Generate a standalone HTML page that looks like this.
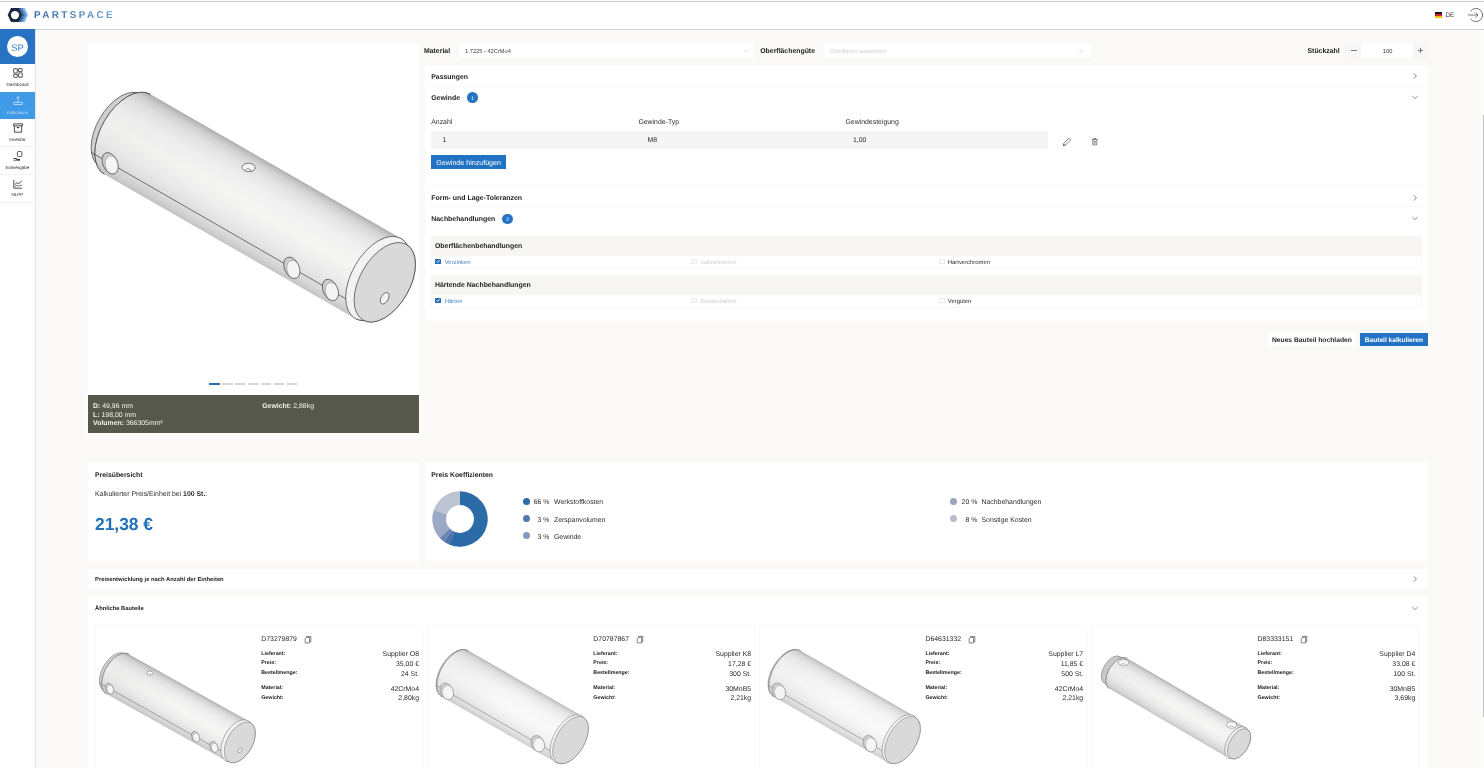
<!DOCTYPE html>
<html><head><meta charset="utf-8"><title>Partspace</title>
<style>
html,body{margin:0;padding:0;}
body{width:1484px;height:768px;overflow:hidden;background:#faf9f7;position:relative;font-family:"Liberation Sans",sans-serif;}
#r{position:absolute;left:0;top:0;width:1484px;height:768px;will-change:transform;overflow:hidden;}
#r>div,#r>svg{position:absolute;display:block;}
.t{white-space:pre;text-rendering:geometricPrecision;}
svg{overflow:visible;}
</style></head><body><div id="r">
<div style="left:0.00px;top:0.00px;width:1484.00px;height:30.00px;background:#fff;"></div>
<div style="left:0.00px;top:1.00px;width:1484.00px;height:1.00px;background:#c2c8cf;"></div>
<div style="left:0.00px;top:29.00px;width:1484.00px;height:1.00px;background:#cbd3db;"></div>
<svg style="left:6.00px;top:6.00px;" width="26.00" height="18.00" viewBox="0 0 26 18"><path d="M16.8,2.1 L18.6,2.1 L21.9,9 L18.6,15.9 L16.8,15.9 L20.1,9 Z" fill="#7db3ea"/><path d="M15,2.1 L16.8,2.1 L20.1,9 L16.8,15.9 L15,15.9 L18.3,9 Z" fill="#4a8ad0"/><path d="M13,2.1 L15,2.1 L18.3,9 L15,15.9 L13,15.9 L16.3,9 Z" fill="#2b62a3"/><path d="M5,2.1 L13,2.1 L16.3,9 L13,15.9 L5,15.9 L1.7,9 Z" fill="#1b2742"/><circle cx="9" cy="9.1" r="4.15" fill="#fff"/></svg>
<div class="t" style="left:34px;top:9.6px;line-height:12px;font-size:9.9px;font-weight:bold;letter-spacing:2.4px;background:linear-gradient(90deg,#3768a0,#6fa2d4);-webkit-background-clip:text;background-clip:text;color:transparent;">PARTSPACE</div>
<div style="left:1434.70px;top:11.80px;width:7.00px;height:2.20px;background:#111;"></div>
<div style="left:1434.70px;top:14.00px;width:7.00px;height:2.20px;background:#d2202a;"></div>
<div style="left:1434.70px;top:16.20px;width:7.00px;height:2.20px;background:#f2c300;"></div>
<div class="t" style="left:1445.50px;top:10.20px;font-size:6.40px;font-weight:normal;color:#444;line-height:12px;">DE</div>
<svg style="left:1466.00px;top:6.00px;" width="18.00" height="18.00" viewBox="0 0 18 18"><path d="M4.6,5.2 A6.6,6.6 0 1 1 4.6,12.8" fill="none" stroke="#555" stroke-width="0.8"/><path d="M2,9 L12,9 M9.3,6.5 L12,9 L9.3,11.5" fill="none" stroke="#555" stroke-width="0.8"/></svg>
<div style="left:0.00px;top:30.00px;width:35.00px;height:738.00px;background:#fff;"></div>
<div style="left:35.00px;top:30.00px;width:1.00px;height:738.00px;background:#dfe6ed;"></div>
<div style="left:0.00px;top:29.00px;width:35.00px;height:34.60px;background:#2673c4;"></div>
<div style="left:7px;top:36px;width:21px;height:21px;border-radius:50%;background:#fff;"></div>
<div class="t" style="left:-82.50px;width:200px;text-align:center;top:41.80px;font-size:9.40px;font-weight:normal;color:#3b82cf;line-height:12px;">SP</div>
<svg style="left:11.80px;top:67.00px;" width="12.00" height="12.00" viewBox="0 0 12 12"><g fill="none" stroke="#333" stroke-width="0.85"><rect x="1.7" y="1.6" width="3.6" height="4.4" rx="0.4"/><rect x="6.6" y="1.6" width="3.6" height="3.0" rx="0.4"/><rect x="1.7" y="7.3" width="3.6" height="3.0" rx="0.4"/><rect x="6.6" y="5.9" width="3.6" height="4.4" rx="0.4"/></g></svg>
<div class="t" style="left:-82.50px;width:200px;text-align:center;top:79.00px;font-size:4.50px;font-weight:normal;color:#1c1c1c;line-height:12px;">Dashboard</div>
<div style="left:0.00px;top:92.20px;width:35.20px;height:26.60px;background:#3f9ae8;"></div>
<svg style="left:11.50px;top:95.30px;" width="12.00" height="12.00" viewBox="0 0 12 12"><g fill="none" stroke="#e3f0fb" stroke-width="0.85"><path d="M6,1.6 L6,7.2 M4.6,3.0 L6,1.6 L7.4,3.0" stroke-width="0.7"/><rect x="1.8" y="7.3" width="8.6" height="2.3" rx="0.3" stroke-width="0.7"/></g></svg>
<div class="t" style="left:-82.50px;width:200px;text-align:center;top:107.00px;font-size:4.40px;font-weight:normal;color:#b9d9f6;line-height:12px;">Kalkulation</div>
<svg style="left:11.50px;top:122.40px;" width="12.00" height="12.00" viewBox="0 0 12 12"><g fill="none" stroke="#333" stroke-width="0.85"><rect x="1.7" y="1.9" width="8.6" height="2.0"/><path d="M2.4,3.9 L2.4,10.2 L9.6,10.2 L9.6,3.9"/><path d="M4.8,5.6 L7.2,5.6" stroke-width="1.1"/></g></svg>
<div class="t" style="left:-82.50px;width:200px;text-align:center;top:133.90px;font-size:4.50px;font-weight:normal;color:#1c1c1c;line-height:12px;">Inventar</div>
<div style="left:0.00px;top:146.20px;width:35.00px;height:0.60px;background:#f3f3f3;"></div>
<svg style="left:11.50px;top:149.60px;" width="12.00" height="12.00" viewBox="0 0 12 12"><g fill="none" stroke="#333" stroke-width="0.85"><rect x="5.4" y="1.5" width="4.4" height="5.0" rx="1"/><path d="M1.5,8.5 L4,8.5 L5.5,9.6 L8,9.6" stroke-width="1.1"/><path d="M1.5,10.3 L8,10.3" stroke-width="0.7"/></g></svg>
<div class="t" style="left:-82.50px;width:200px;text-align:center;top:162.10px;font-size:4.50px;font-weight:normal;color:#1c1c1c;line-height:12px;">Einlvergabe</div>
<div style="left:0.00px;top:173.70px;width:35.00px;height:0.60px;background:#f3f3f3;"></div>
<svg style="left:11.50px;top:177.60px;" width="12.00" height="12.00" viewBox="0 0 12 12"><g fill="none" stroke="#333" stroke-width="0.85"><path d="M1.8,1.8 L1.8,10.2 L10.2,10.2"/><path d="M2.8,6.6 L5,4.6 L6.8,5.8 L9.9,2.6"/><path d="M2.8,8.6 L5,7.4 L6.8,8.2 L9.9,6.8" stroke-width="0.7"/></g></svg>
<div class="t" style="left:-82.50px;width:200px;text-align:center;top:188.90px;font-size:4.50px;font-weight:normal;color:#1c1c1c;line-height:12px;">NLPP</div>
<div style="left:0.00px;top:201.70px;width:35.00px;height:0.60px;background:#f3f3f3;"></div>
<div style="left:82.00px;top:392.00px;width:342.00px;height:46.50px;background:#fcfbfa;border-radius:3px;"></div>
<div style="left:88.00px;top:42.50px;width:331.00px;height:390.00px;background:#fff;"></div>
<div style="left:88.00px;top:395.00px;width:330.80px;height:37.50px;background:#55584a;"></div>
<div class="t" style="left:93.10px;top:400.80px;font-size:6.90px;font-weight:normal;color:#f2f2ec;line-height:12px;"><b>D:</b> 49,96 mm</div>
<div class="t" style="left:93.10px;top:409.90px;font-size:6.90px;font-weight:normal;color:#f2f2ec;line-height:12px;"><b>L:</b> 198,00 mm</div>
<div class="t" style="left:93.10px;top:418.00px;font-size:6.90px;font-weight:normal;color:#f2f2ec;line-height:12px;"><b>Volumen:</b> 366305mm³</div>
<div class="t" style="left:262.25px;top:400.80px;font-size:6.90px;font-weight:normal;color:#f2f2ec;line-height:12px;"><b>Gewicht:</b> 2,88kg</div>
<div style="left:209.40px;top:383.00px;width:10.40px;height:1.60px;background:#2a6db3;"></div>
<div style="left:222.25px;top:383.00px;width:10.40px;height:1.60px;background:#d6d6d6;"></div>
<div style="left:235.10px;top:383.00px;width:10.40px;height:1.60px;background:#d6d6d6;"></div>
<div style="left:247.95px;top:383.00px;width:10.40px;height:1.60px;background:#d6d6d6;"></div>
<div style="left:260.80px;top:383.00px;width:10.40px;height:1.60px;background:#d6d6d6;"></div>
<div style="left:273.65px;top:383.00px;width:10.40px;height:1.60px;background:#d6d6d6;"></div>
<div style="left:286.50px;top:383.00px;width:10.40px;height:1.60px;background:#d6d6d6;"></div>
<svg style="left:88.00px;top:42.50px;" width="331.00" height="352.50" viewBox="88 42.5 331 352.5"><g transform="translate(122.97,131.26) rotate(29.90)"><defs><linearGradient id="cg1" gradientUnits="userSpaceOnUse" x1="0" y1="-46.10" x2="0" y2="46.10"><stop offset="0" stop-color="#a9a9a9"/><stop offset="0.02" stop-color="#bbbbbb"/><stop offset="0.07" stop-color="#d2d2d2"/><stop offset="0.15" stop-color="#e2e2e2"/><stop offset="0.3" stop-color="#f0f0f0"/><stop offset="0.52" stop-color="#f5f5f4"/><stop offset="0.72" stop-color="#ececec"/><stop offset="0.865" stop-color="#dfdfdf"/><stop offset="0.94" stop-color="#d3d3d3"/><stop offset="1" stop-color="#c4c4c4"/></linearGradient><linearGradient id="cg1x" gradientUnits="userSpaceOnUse" x1="0" y1="0" x2="302.00" y2="0"><stop offset="0" stop-color="#000" stop-opacity="0.020"/><stop offset="0.45" stop-color="#000" stop-opacity="0"/><stop offset="1" stop-color="#000" stop-opacity="0"/></linearGradient></defs><path d="M-3.00,-41.60 L5.00,-46.10 A26.40,46.10 0 0 0 5.00,46.10 L-3.00,41.60 A23.82,41.60 0 0 1 -3.00,-41.60 Z" fill="#cfcfcf" stroke="#3a3a3a" stroke-width="0.62"/><path d="M5.00,-46.10 L294.30,-46.10 A26.40,46.10 0 0 1 294.30,46.10 L5.00,46.10 A26.40,46.10 0 0 1 5.00,-46.10 Z" fill="url(#cg1)"/><path d="M5.00,46.10 A26.40,46.10 0 0 1 5.00,-46.10" fill="none" stroke="#3a3a3a" stroke-width="0.62"/><path d="M5.00,-46.10 L294.30,-46.10 A26.40,46.10 0 0 1 294.30,46.10 L5.00,46.10 A26.40,46.10 0 0 1 5.00,-46.10 Z" fill="url(#cg1x)"/><path d="M-16.93,33.75 L312.28,33.75" stroke="#3a3a3a" stroke-width="0.62" fill="none"/><path d="M294.30,-46.10 A26.40,46.10 0 0 1 294.30,46.10 L302.00,43.60 A24.97,43.60 0 0 0 302.00,-43.60 Z" fill="#f3f3f3" stroke="#3a3a3a" stroke-width="0.62"/><ellipse cx="294.30" cy="0" rx="26.40" ry="46.10" fill="#f3f3f3" stroke="#3a3a3a" stroke-width="0.62"/><path d="M294.30,-45.48 L302.00,-42.98 L302.00,42.98 L294.30,45.48 Z" fill="#f3f3f3"/><ellipse cx="302.00" cy="0" rx="24.97" ry="43.60" fill="#d9d9d9" stroke="#3a3a3a" stroke-width="0.62"/><ellipse cx="309.90" cy="13.90" rx="3.61" ry="6.30" fill="#f1f1f1" stroke="#3a3a3a" stroke-width="0.62"/><g transform="translate(4.60,33.75) rotate(35.70)"><clipPath id="cg1h0"><ellipse rx="11.30" ry="7.30"/></clipPath><ellipse rx="11.30" ry="7.30" fill="#cdcdcd"/><ellipse cx="4.29" cy="-1.46" rx="11.30" ry="7.30" fill="#f5f5f5" stroke="#3a3a3a" stroke-opacity="0.55" stroke-width="0.50" clip-path="url(#cg1h0)"/><ellipse rx="11.30" ry="7.30" fill="none" stroke="#3a3a3a" stroke-width="0.62"/></g><g transform="translate(214.20,33.75) rotate(35.70)"><clipPath id="cg1h1"><ellipse rx="11.30" ry="7.30"/></clipPath><ellipse rx="11.30" ry="7.30" fill="#cdcdcd"/><ellipse cx="4.29" cy="-1.46" rx="11.30" ry="7.30" fill="#f5f5f5" stroke="#3a3a3a" stroke-opacity="0.55" stroke-width="0.50" clip-path="url(#cg1h1)"/><ellipse rx="11.30" ry="7.30" fill="none" stroke="#3a3a3a" stroke-width="0.62"/></g><g transform="translate(258.70,33.75) rotate(35.70)"><clipPath id="cg1h2"><ellipse rx="11.30" ry="7.30"/></clipPath><ellipse rx="11.30" ry="7.30" fill="#cdcdcd"/><ellipse cx="4.29" cy="-1.46" rx="11.30" ry="7.30" fill="#f5f5f5" stroke="#3a3a3a" stroke-opacity="0.55" stroke-width="0.50" clip-path="url(#cg1h2)"/><ellipse rx="11.30" ry="7.30" fill="none" stroke="#3a3a3a" stroke-width="0.62"/></g><g transform="translate(126.70,-31.65) rotate(-27.00)"><ellipse rx="6.60" ry="4.20" fill="#f6f6f6" stroke="#3a3a3a" stroke-width="0.62"/><path d="M-3.63,3.28 A3.63,3.36 0 0 1 2.97,3.49" fill="#fbfbfb" stroke="#3a3a3a" stroke-width="0.56"/></g></g></svg>
<div class="t" style="left:424.00px;top:45.60px;font-size:6.90px;font-weight:bold;color:#1d1d1d;line-height:12px;">Material</div>
<div style="left:459.40px;top:42.75px;width:294.60px;height:15.40px;background:#fff;"></div>
<div class="t" style="left:465.00px;top:45.60px;font-size:5.70px;font-weight:normal;color:#444;line-height:12px;">1.7225 - 42CrMo4</div>
<svg style="left:741.50px;top:47.50px;" width="8.00" height="6.00" viewBox="0 0 8 6"><path d="M1.6,2 L4,4.2 L6.4,2" fill="none" stroke="#d2d2d2" stroke-width="0.7"/></svg>
<div class="t" style="left:760.25px;top:45.60px;font-size:6.90px;font-weight:bold;color:#1d1d1d;line-height:12px;">Oberflächengüte</div>
<div style="left:823.75px;top:42.75px;width:267.50px;height:15.40px;background:#fff;"></div>
<div class="t" style="left:830.00px;top:45.60px;font-size:5.65px;font-weight:normal;color:#cfcfcf;line-height:12px;">Oberfläche auswählen</div>
<svg style="left:1077.00px;top:47.50px;" width="8.00" height="6.00" viewBox="0 0 8 6"><path d="M1.6,2 L4,4.2 L6.4,2" fill="none" stroke="#d2d2d2" stroke-width="0.7"/></svg>
<div class="t" style="left:1307.50px;top:45.60px;font-size:6.90px;font-weight:bold;color:#1d1d1d;line-height:12px;">Stückzahl</div>
<div style="left:1346.00px;top:42.75px;width:81.50px;height:15.40px;background:#f6f6f6;"></div>
<div style="left:1361.00px;top:42.75px;width:52.00px;height:15.40px;background:#fff;"></div>
<div class="t" style="left:1287.60px;width:200px;text-align:center;top:45.60px;font-size:5.70px;font-weight:normal;color:#2c2c2c;line-height:12px;">100</div>
<div style="left:1351.30px;top:50.20px;width:5.40px;height:0.70px;background:#777;"></div>
<div style="left:1417.90px;top:50.20px;width:5.40px;height:0.70px;background:#777;"></div>
<div style="left:1420.25px;top:47.85px;width:0.70px;height:5.40px;background:#777;"></div>
<div style="left:425.00px;top:66.00px;width:1002.50px;height:255.30px;background:#fff;"></div>
<div class="t" style="left:431.25px;top:71.70px;font-size:6.90px;font-weight:bold;color:#1d1d1d;line-height:12px;">Passungen</div>
<svg style="left:1411.00px;top:71.30px;" width="8.00" height="10.00" viewBox="0 0 8 10"><path d="M2.8,2.4 L5.4,5 L2.8,7.6" fill="none" stroke="#666" stroke-width="0.8"/></svg>
<div style="left:425.50px;top:86.00px;width:1002.00px;height:0.70px;background:#f7f7f7;"></div>
<div class="t" style="left:431.25px;top:92.60px;font-size:6.90px;font-weight:bold;color:#1d1d1d;line-height:12px;">Gewinde</div>
<div style="left:467.1px;top:92.3px;width:10.6px;height:10.6px;border-radius:50%;background:#2673c4;"></div>
<div class="t" style="left:372.40px;width:200px;text-align:center;top:92.70px;font-size:5.00px;font-weight:normal;color:#fff;line-height:12px;">1</div>
<svg style="left:1410.00px;top:93.00px;" width="10.00" height="8.00" viewBox="0 0 10 8"><path d="M2.2,3.0 L5,5.6 L7.8,3.0" fill="none" stroke="#8a8a8a" stroke-width="0.9"/></svg>
<div class="t" style="left:431.25px;top:116.70px;font-size:6.90px;font-weight:normal;color:#2c2c2c;line-height:12px;">Anzahl</div>
<div class="t" style="left:638.40px;top:116.70px;font-size:6.90px;font-weight:normal;color:#2c2c2c;line-height:12px;">Gewinde-Typ</div>
<div class="t" style="left:845.50px;top:116.70px;font-size:6.90px;font-weight:normal;color:#2c2c2c;line-height:12px;">Gewindesteigung</div>
<div style="left:431.25px;top:131.25px;width:616.50px;height:17.25px;background:#f5f5f5;"></div>
<div class="t" style="left:442.50px;top:135.10px;font-size:6.90px;font-weight:normal;color:#2c2c2c;line-height:12px;">1</div>
<div class="t" style="left:647.50px;top:135.10px;font-size:6.90px;font-weight:normal;color:#2c2c2c;line-height:12px;">M8</div>
<div class="t" style="left:853.00px;top:135.10px;font-size:6.90px;font-weight:normal;color:#2c2c2c;line-height:12px;">1,00</div>
<svg style="left:1061.00px;top:136.00px;" width="12.00" height="12.00" viewBox="0 0 12 12"><path d="M2.2,9.6 L2.9,7.2 L7.9,2.2 L9.6,3.9 L4.6,8.9 Z M2.2,9.6 L4.6,8.9" fill="none" stroke="#555" stroke-width="0.75" stroke-linejoin="round"/></svg>
<svg style="left:1089.00px;top:135.90px;" width="12.00" height="12.00" viewBox="0 0 12 12"><path d="M2.9,3.5 L8.7,3.5 M4.8,3.3 L4.8,2.4 L6.8,2.4 L6.8,3.3 M3.6,3.7 L3.9,8.9 L7.7,8.9 L8.0,3.7" fill="none" stroke="#555" stroke-width="0.7"/><rect x="4.9" y="5.1" width="1.8" height="2.2" fill="none" stroke="#666" stroke-width="0.55"/></svg>
<div style="left:431.25px;top:155.00px;width:74.80px;height:13.80px;background:#2272c3;"></div>
<div class="t" style="left:368.60px;width:200px;text-align:center;top:157.00px;font-size:7.10px;font-weight:normal;color:#fff;line-height:12px;">Gewinde hinzufügen</div>
<div style="left:425.50px;top:185.00px;width:1002.00px;height:0.70px;background:#f7f7f7;"></div>
<div class="t" style="left:431.25px;top:193.00px;font-size:6.95px;font-weight:bold;color:#1d1d1d;line-height:12px;">Form- und Lage-Toleranzen</div>
<svg style="left:1411.00px;top:192.60px;" width="8.00" height="10.00" viewBox="0 0 8 10"><path d="M2.8,2.4 L5.4,5 L2.8,7.6" fill="none" stroke="#666" stroke-width="0.8"/></svg>
<div style="left:425.50px;top:206.30px;width:1002.00px;height:0.70px;background:#f8f8f8;"></div>
<div class="t" style="left:431.25px;top:213.90px;font-size:6.90px;font-weight:bold;color:#1d1d1d;line-height:12px;">Nachbehandlungen</div>
<div style="left:502.45px;top:213.5px;width:10.6px;height:10.6px;border-radius:50%;background:#2673c4;"></div>
<div class="t" style="left:407.75px;width:200px;text-align:center;top:213.90px;font-size:5.00px;font-weight:normal;color:#fff;line-height:12px;">2</div>
<svg style="left:1410.00px;top:214.20px;" width="10.00" height="8.00" viewBox="0 0 10 8"><path d="M2.2,3.0 L5,5.6 L7.8,3.0" fill="none" stroke="#8a8a8a" stroke-width="0.9"/></svg>
<div style="left:431.00px;top:235.60px;width:991.00px;height:33.50px;background:#f7f6f5;"></div>
<div class="t" style="left:435.00px;top:241.30px;font-size:6.90px;font-weight:bold;color:#1d1d1d;line-height:12px;">Oberflächenbehandlungen</div>
<div style="left:432.00px;top:255.60px;width:989.00px;height:12.50px;background:#fff;"></div>
<div style="left:435.00px;top:258.60px;width:6.00px;height:5.80px;background:#2a6cbc;border-radius:0.6px;"></div>
<svg style="left:435.00px;top:258.40px;" width="6.20" height="6.20" viewBox="0 0 6.2 6.2"><path d="M1.5,3.2 L2.7,4.4 L4.8,1.9" fill="none" stroke="#fff" stroke-width="0.8"/></svg>
<div class="t" style="left:444.75px;top:256.60px;font-size:5.90px;font-weight:normal;color:#4681c2;line-height:12px;">Verzinken</div>
<div style="left:691.10px;top:258.60px;width:6.00px;height:5.80px;background:#f7f7f7;border:0.5px solid #ededed;box-sizing:border-box;border-radius:0.6px;"></div>
<div class="t" style="left:700.40px;top:256.60px;font-size:5.90px;font-weight:normal;color:#cfcfcf;line-height:12px;">Galvanisieren</div>
<div style="left:938.60px;top:258.60px;width:6.00px;height:5.80px;background:#fff;border:0.5px solid #e9e9e9;box-sizing:border-box;border-radius:0.6px;"></div>
<div class="t" style="left:947.80px;top:256.60px;font-size:5.90px;font-weight:normal;color:#2c2c2c;line-height:12px;">Hartverchromen</div>
<div style="left:431.00px;top:274.60px;width:991.00px;height:33.50px;background:#f7f6f5;"></div>
<div class="t" style="left:435.00px;top:280.30px;font-size:6.90px;font-weight:bold;color:#1d1d1d;line-height:12px;">Härtende Nachbehandlungen</div>
<div style="left:432.00px;top:294.60px;width:989.00px;height:12.50px;background:#fff;"></div>
<div style="left:435.00px;top:297.60px;width:6.00px;height:5.80px;background:#2a6cbc;border-radius:0.6px;"></div>
<svg style="left:435.00px;top:297.40px;" width="6.20" height="6.20" viewBox="0 0 6.2 6.2"><path d="M1.5,3.2 L2.7,4.4 L4.8,1.9" fill="none" stroke="#fff" stroke-width="0.8"/></svg>
<div class="t" style="left:444.75px;top:295.60px;font-size:5.90px;font-weight:normal;color:#4681c2;line-height:12px;">Härten</div>
<div style="left:691.10px;top:297.60px;width:6.00px;height:5.80px;background:#f7f7f7;border:0.5px solid #ededed;box-sizing:border-box;border-radius:0.6px;"></div>
<div class="t" style="left:700.40px;top:295.60px;font-size:5.90px;font-weight:normal;color:#cfcfcf;line-height:12px;">Einsatzhärten</div>
<div style="left:938.60px;top:297.60px;width:6.00px;height:5.80px;background:#fff;border:0.5px solid #e9e9e9;box-sizing:border-box;border-radius:0.6px;"></div>
<div class="t" style="left:947.80px;top:295.60px;font-size:5.90px;font-weight:normal;color:#2c2c2c;line-height:12px;">Vergüten</div>
<div style="left:1268.00px;top:333.00px;width:87.60px;height:13.20px;background:#fff;"></div>
<div class="t" style="left:1211.90px;width:200px;text-align:center;top:334.80px;font-size:6.72px;font-weight:bold;color:#262626;line-height:12px;">Neues Bauteil hochladen</div>
<div style="left:1359.75px;top:333.00px;width:68.20px;height:13.40px;background:#2272c3;"></div>
<div class="t" style="left:1293.90px;width:200px;text-align:center;top:334.90px;font-size:6.60px;font-weight:bold;color:#fff;line-height:12px;">Bauteil kalkulieren</div>
<div style="left:88.00px;top:462.00px;width:331.00px;height:98.60px;background:#fff;"></div>
<div class="t" style="left:95.00px;top:469.70px;font-size:6.85px;font-weight:bold;color:#1d1d1d;line-height:12px;">Preisübersicht</div>
<div class="t" style="left:95.00px;top:489.10px;font-size:6.90px;font-weight:normal;color:#2c2c2c;line-height:12px;">Kalkulierter Preis/Einheit bei <b>100 St.</b>:</div>
<div class="t" style="left:95.00px;top:511.50px;font-size:17.40px;font-weight:bold;color:#2571b8;line-height:24px;">21,38 €</div>
<div style="left:425.00px;top:462.00px;width:1002.50px;height:98.60px;background:#fff;"></div>
<div class="t" style="left:431.25px;top:469.70px;font-size:6.86px;font-weight:bold;color:#1d1d1d;line-height:12px;">Preis Koeffizienten</div>
<svg style="left:429.75px;top:489.30px;" width="60.00" height="60.00" viewBox="0 0 60 60"><path d="M30.00,2.30 A27.70,27.70 0 1 1 18.91,55.38 L24.44,42.74 A13.90,13.90 0 1 0 30.00,16.10 Z" fill="#2b6ca8"/><path d="M19.18,55.50 A27.70,27.70 0 0 1 14.27,52.80 L22.11,41.44 A13.90,13.90 0 0 0 24.57,42.80 Z" fill="#4b73ac"/><path d="M14.51,52.96 A27.70,27.70 0 0 1 9.54,48.68 L19.74,39.37 A13.90,13.90 0 0 0 22.23,41.52 Z" fill="#6b86b6"/><path d="M9.74,48.89 A27.70,27.70 0 0 1 3.82,20.94 L16.87,25.45 A13.90,13.90 0 0 0 19.83,39.48 Z" fill="#9aa9c6"/><path d="M3.73,21.21 A27.70,27.70 0 0 1 30.00,2.30 L30.00,16.10 A13.90,13.90 0 0 0 16.82,25.59 Z" fill="#bcc3d1"/></svg>
<div style="left:522.50px;top:497.50px;width:7px;height:7px;border-radius:50%;background:#2b6ca8;"></div>
<div class="t" style="right:934.60px;top:496.90px;font-size:6.90px;font-weight:normal;color:#2c2c2c;line-height:12px;">66 %</div>
<div class="t" style="left:554.00px;top:496.90px;font-size:6.90px;font-weight:normal;color:#2c2c2c;line-height:12px;">Werkstoffkosten</div>
<div style="left:522.50px;top:515.10px;width:7px;height:7px;border-radius:50%;background:#5578ae;"></div>
<div class="t" style="right:934.60px;top:515.10px;font-size:6.90px;font-weight:normal;color:#2c2c2c;line-height:12px;"> 3 %</div>
<div class="t" style="left:554.00px;top:515.10px;font-size:6.90px;font-weight:normal;color:#2c2c2c;line-height:12px;">Zerspanvolumen</div>
<div style="left:522.50px;top:532.30px;width:7px;height:7px;border-radius:50%;background:#8497bd;"></div>
<div class="t" style="right:934.60px;top:532.30px;font-size:6.90px;font-weight:normal;color:#2c2c2c;line-height:12px;"> 3 %</div>
<div class="t" style="left:554.00px;top:532.30px;font-size:6.90px;font-weight:normal;color:#2c2c2c;line-height:12px;">Gewinde</div>
<div style="left:950.00px;top:497.50px;width:7px;height:7px;border-radius:50%;background:#9aa4bb;"></div>
<div class="t" style="right:506.70px;top:496.90px;font-size:6.90px;font-weight:normal;color:#2c2c2c;line-height:12px;">20 %</div>
<div class="t" style="left:981.50px;top:496.90px;font-size:6.90px;font-weight:normal;color:#2c2c2c;line-height:12px;">Nachbehandlungen</div>
<div style="left:950.00px;top:515.25px;width:7px;height:7px;border-radius:50%;background:#b9bdc7;"></div>
<div class="t" style="right:506.70px;top:515.25px;font-size:6.90px;font-weight:normal;color:#2c2c2c;line-height:12px;"> 8 %</div>
<div class="t" style="left:981.50px;top:515.25px;font-size:6.90px;font-weight:normal;color:#2c2c2c;line-height:12px;">Sonstige Kosten</div>
<div style="left:88.00px;top:568.75px;width:1339.50px;height:20.00px;background:#fff;"></div>
<div class="t" style="left:95.00px;top:574.10px;font-size:5.84px;font-weight:bold;color:#222;line-height:12px;">Preisentwicklung je nach Anzahl der Einheiten</div>
<svg style="left:1411.00px;top:573.80px;" width="8.00" height="10.00" viewBox="0 0 8 10"><path d="M2.8,2.4 L5.4,5 L2.8,7.6" fill="none" stroke="#666" stroke-width="0.8"/></svg>
<div style="left:88.00px;top:597.25px;width:1339.50px;height:180.00px;background:#fff;"></div>
<div class="t" style="left:95.00px;top:602.60px;font-size:5.81px;font-weight:bold;color:#222;line-height:12px;">Ähnliche Bauteile</div>
<svg style="left:1410.00px;top:603.50px;" width="10.00" height="8.00" viewBox="0 0 10 8"><path d="M2.2,3.0 L5,5.6 L7.8,3.0" fill="none" stroke="#8a8a8a" stroke-width="0.9"/></svg>
<div style="left:95.00px;top:624.40px;width:327.80px;height:160.00px;background:#fff;border:0.6px solid #fafafa;box-sizing:border-box;"></div>
<div class="t" style="left:261.25px;top:633.80px;font-size:6.90px;font-weight:normal;color:#2c2c2c;line-height:12px;">D73279879</div>
<svg style="left:304.00px;top:634.50px;" width="8.00" height="9.00" viewBox="0 0 8 9"><path d="M2.6,2.4 L2.6,1.4 L6.8,1.4 L6.8,6.6 L5.8,6.6 M1.2,3.6 L2.4,2.4 L5.6,2.4 L5.6,7.9 L1.2,7.9 Z" fill="none" stroke="#444" stroke-width="0.65"/></svg>
<div class="t" style="left:261.25px;top:647.60px;font-size:5.30px;font-weight:bold;color:#1a1a1a;line-height:12px;">Lieferant:</div>
<div class="t" style="left:261.25px;top:657.40px;font-size:5.30px;font-weight:bold;color:#1a1a1a;line-height:12px;">Preis:</div>
<div class="t" style="left:261.25px;top:667.10px;font-size:5.30px;font-weight:bold;color:#1a1a1a;line-height:12px;">Bestellmenge:</div>
<div class="t" style="left:261.25px;top:682.00px;font-size:5.30px;font-weight:bold;color:#1a1a1a;line-height:12px;">Material:</div>
<div class="t" style="left:261.25px;top:691.80px;font-size:5.30px;font-weight:bold;color:#1a1a1a;line-height:12px;">Gewicht:</div>
<div class="t" style="right:1065.00px;top:649.40px;font-size:6.90px;font-weight:normal;color:#2c2c2c;line-height:12px;">Supplier O8</div>
<div class="t" style="right:1065.00px;top:659.10px;font-size:6.90px;font-weight:normal;color:#2c2c2c;line-height:12px;">35,00 €</div>
<div class="t" style="right:1065.00px;top:668.80px;font-size:6.90px;font-weight:normal;color:#2c2c2c;line-height:12px;">24 St.</div>
<div class="t" style="right:1065.00px;top:683.80px;font-size:6.90px;font-weight:normal;color:#2c2c2c;line-height:12px;">42CrMo4</div>
<div class="t" style="right:1065.00px;top:693.40px;font-size:6.90px;font-weight:normal;color:#2c2c2c;line-height:12px;">2,80kg</div>
<div style="left:427.10px;top:624.40px;width:327.80px;height:160.00px;background:#fff;border:0.6px solid #fafafa;box-sizing:border-box;"></div>
<div class="t" style="left:593.35px;top:633.80px;font-size:6.90px;font-weight:normal;color:#2c2c2c;line-height:12px;">D70787867</div>
<svg style="left:636.10px;top:634.50px;" width="8.00" height="9.00" viewBox="0 0 8 9"><path d="M2.6,2.4 L2.6,1.4 L6.8,1.4 L6.8,6.6 L5.8,6.6 M1.2,3.6 L2.4,2.4 L5.6,2.4 L5.6,7.9 L1.2,7.9 Z" fill="none" stroke="#444" stroke-width="0.65"/></svg>
<div class="t" style="left:593.35px;top:647.60px;font-size:5.30px;font-weight:bold;color:#1a1a1a;line-height:12px;">Lieferant:</div>
<div class="t" style="left:593.35px;top:657.40px;font-size:5.30px;font-weight:bold;color:#1a1a1a;line-height:12px;">Preis:</div>
<div class="t" style="left:593.35px;top:667.10px;font-size:5.30px;font-weight:bold;color:#1a1a1a;line-height:12px;">Bestellmenge:</div>
<div class="t" style="left:593.35px;top:682.00px;font-size:5.30px;font-weight:bold;color:#1a1a1a;line-height:12px;">Material:</div>
<div class="t" style="left:593.35px;top:691.80px;font-size:5.30px;font-weight:bold;color:#1a1a1a;line-height:12px;">Gewicht:</div>
<div class="t" style="right:732.90px;top:649.40px;font-size:6.90px;font-weight:normal;color:#2c2c2c;line-height:12px;">Supplier K8</div>
<div class="t" style="right:732.90px;top:659.10px;font-size:6.90px;font-weight:normal;color:#2c2c2c;line-height:12px;">17,28 €</div>
<div class="t" style="right:732.90px;top:668.80px;font-size:6.90px;font-weight:normal;color:#2c2c2c;line-height:12px;">300 St.</div>
<div class="t" style="right:732.90px;top:683.80px;font-size:6.90px;font-weight:normal;color:#2c2c2c;line-height:12px;">30MnB5</div>
<div class="t" style="right:732.90px;top:693.40px;font-size:6.90px;font-weight:normal;color:#2c2c2c;line-height:12px;">2,21kg</div>
<div style="left:759.20px;top:624.40px;width:327.80px;height:160.00px;background:#fff;border:0.6px solid #fafafa;box-sizing:border-box;"></div>
<div class="t" style="left:925.45px;top:633.80px;font-size:6.90px;font-weight:normal;color:#2c2c2c;line-height:12px;">D64631332</div>
<svg style="left:968.20px;top:634.50px;" width="8.00" height="9.00" viewBox="0 0 8 9"><path d="M2.6,2.4 L2.6,1.4 L6.8,1.4 L6.8,6.6 L5.8,6.6 M1.2,3.6 L2.4,2.4 L5.6,2.4 L5.6,7.9 L1.2,7.9 Z" fill="none" stroke="#444" stroke-width="0.65"/></svg>
<div class="t" style="left:925.45px;top:647.60px;font-size:5.30px;font-weight:bold;color:#1a1a1a;line-height:12px;">Lieferant:</div>
<div class="t" style="left:925.45px;top:657.40px;font-size:5.30px;font-weight:bold;color:#1a1a1a;line-height:12px;">Preis:</div>
<div class="t" style="left:925.45px;top:667.10px;font-size:5.30px;font-weight:bold;color:#1a1a1a;line-height:12px;">Bestellmenge:</div>
<div class="t" style="left:925.45px;top:682.00px;font-size:5.30px;font-weight:bold;color:#1a1a1a;line-height:12px;">Material:</div>
<div class="t" style="left:925.45px;top:691.80px;font-size:5.30px;font-weight:bold;color:#1a1a1a;line-height:12px;">Gewicht:</div>
<div class="t" style="right:400.80px;top:649.40px;font-size:6.90px;font-weight:normal;color:#2c2c2c;line-height:12px;">Supplier L7</div>
<div class="t" style="right:400.80px;top:659.10px;font-size:6.90px;font-weight:normal;color:#2c2c2c;line-height:12px;">11,85 €</div>
<div class="t" style="right:400.80px;top:668.80px;font-size:6.90px;font-weight:normal;color:#2c2c2c;line-height:12px;">500 St.</div>
<div class="t" style="right:400.80px;top:683.80px;font-size:6.90px;font-weight:normal;color:#2c2c2c;line-height:12px;">42CrMo4</div>
<div class="t" style="right:400.80px;top:693.40px;font-size:6.90px;font-weight:normal;color:#2c2c2c;line-height:12px;">2,21kg</div>
<div style="left:1091.30px;top:624.40px;width:327.80px;height:160.00px;background:#fff;border:0.6px solid #fafafa;box-sizing:border-box;"></div>
<div class="t" style="left:1257.55px;top:633.80px;font-size:6.90px;font-weight:normal;color:#2c2c2c;line-height:12px;">D83333151</div>
<svg style="left:1300.30px;top:634.50px;" width="8.00" height="9.00" viewBox="0 0 8 9"><path d="M2.6,2.4 L2.6,1.4 L6.8,1.4 L6.8,6.6 L5.8,6.6 M1.2,3.6 L2.4,2.4 L5.6,2.4 L5.6,7.9 L1.2,7.9 Z" fill="none" stroke="#444" stroke-width="0.65"/></svg>
<div class="t" style="left:1257.55px;top:647.60px;font-size:5.30px;font-weight:bold;color:#1a1a1a;line-height:12px;">Lieferant:</div>
<div class="t" style="left:1257.55px;top:657.40px;font-size:5.30px;font-weight:bold;color:#1a1a1a;line-height:12px;">Preis:</div>
<div class="t" style="left:1257.55px;top:667.10px;font-size:5.30px;font-weight:bold;color:#1a1a1a;line-height:12px;">Bestellmenge:</div>
<div class="t" style="left:1257.55px;top:682.00px;font-size:5.30px;font-weight:bold;color:#1a1a1a;line-height:12px;">Material:</div>
<div class="t" style="left:1257.55px;top:691.80px;font-size:5.30px;font-weight:bold;color:#1a1a1a;line-height:12px;">Gewicht:</div>
<div class="t" style="right:68.70px;top:649.40px;font-size:6.90px;font-weight:normal;color:#2c2c2c;line-height:12px;">Supplier D4</div>
<div class="t" style="right:68.70px;top:659.10px;font-size:6.90px;font-weight:normal;color:#2c2c2c;line-height:12px;">33,08 €</div>
<div class="t" style="right:68.70px;top:668.80px;font-size:6.90px;font-weight:normal;color:#2c2c2c;line-height:12px;">100 St.</div>
<div class="t" style="right:68.70px;top:683.80px;font-size:6.90px;font-weight:normal;color:#2c2c2c;line-height:12px;">30MnB5</div>
<div class="t" style="right:68.70px;top:693.40px;font-size:6.90px;font-weight:normal;color:#2c2c2c;line-height:12px;">3,69kg</div>
<svg style="left:95.00px;top:625.00px;" width="165.00" height="143.00" viewBox="95 625 165 143"><g transform="translate(115.50,672.95) rotate(29.20)"><defs><linearGradient id="cg2" gradientUnits="userSpaceOnUse" x1="0" y1="-22.80" x2="0" y2="22.80"><stop offset="0" stop-color="#a9a9a9"/><stop offset="0.02" stop-color="#bbbbbb"/><stop offset="0.07" stop-color="#d2d2d2"/><stop offset="0.15" stop-color="#e2e2e2"/><stop offset="0.3" stop-color="#f0f0f0"/><stop offset="0.52" stop-color="#f5f5f4"/><stop offset="0.72" stop-color="#ececec"/><stop offset="0.865" stop-color="#dfdfdf"/><stop offset="0.94" stop-color="#d3d3d3"/><stop offset="1" stop-color="#c4c4c4"/></linearGradient><linearGradient id="cg2x" gradientUnits="userSpaceOnUse" x1="0" y1="0" x2="142.40" y2="0"><stop offset="0" stop-color="#000" stop-opacity="0.030"/><stop offset="0.45" stop-color="#000" stop-opacity="0"/><stop offset="1" stop-color="#000" stop-opacity="0"/></linearGradient></defs><path d="M-1.50,-21.30 L2.50,-22.80 A13.00,22.80 0 0 0 2.50,22.80 L-1.50,21.30 A12.14,21.30 0 0 1 -1.50,-21.30 Z" fill="#cfcfcf" stroke="#707070" stroke-width="0.50"/><path d="M2.50,-22.80 L138.90,-22.80 A13.00,22.80 0 0 1 138.90,22.80 L2.50,22.80 A13.00,22.80 0 0 1 2.50,-22.80 Z" fill="url(#cg2)"/><path d="M2.50,22.80 A13.00,22.80 0 0 1 2.50,-22.80" fill="none" stroke="#707070" stroke-width="0.50"/><path d="M2.50,-22.80 L138.90,-22.80 A13.00,22.80 0 0 1 138.90,22.80 L2.50,22.80 A13.00,22.80 0 0 1 2.50,-22.80 Z" fill="url(#cg2x)"/><path d="M-9.11,16.60 L147.81,16.60" stroke="#707070" stroke-width="0.50" fill="none"/><path d="M138.90,-22.80 A13.00,22.80 0 0 1 138.90,22.80 L142.40,22.20 A12.66,22.20 0 0 0 142.40,-22.20 Z" fill="#f3f3f3" stroke="#707070" stroke-width="0.50"/><ellipse cx="138.90" cy="0" rx="13.00" ry="22.80" fill="#f3f3f3" stroke="#707070" stroke-width="0.50"/><path d="M138.90,-22.30 L142.40,-21.70 L142.40,21.70 L138.90,22.30 Z" fill="#f3f3f3"/><ellipse cx="142.40" cy="0" rx="12.66" ry="22.20" fill="#d9d9d9" stroke="#707070" stroke-width="0.50"/><ellipse cx="146.40" cy="6.90" rx="1.60" ry="2.80" fill="#f1f1f1" stroke="#707070" stroke-width="0.50"/><g transform="translate(2.50,16.60) rotate(35.70)"><clipPath id="cg2h0"><ellipse rx="5.60" ry="3.70"/></clipPath><ellipse rx="5.60" ry="3.70" fill="#cdcdcd"/><ellipse cx="2.13" cy="-0.74" rx="5.60" ry="3.70" fill="#f5f5f5" stroke="#707070" stroke-opacity="0.55" stroke-width="0.40" clip-path="url(#cg2h0)"/><ellipse rx="5.60" ry="3.70" fill="none" stroke="#707070" stroke-width="0.50"/></g><g transform="translate(101.00,16.60) rotate(35.70)"><clipPath id="cg2h1"><ellipse rx="5.60" ry="3.70"/></clipPath><ellipse rx="5.60" ry="3.70" fill="#cdcdcd"/><ellipse cx="2.13" cy="-0.74" rx="5.60" ry="3.70" fill="#f5f5f5" stroke="#707070" stroke-opacity="0.55" stroke-width="0.40" clip-path="url(#cg2h1)"/><ellipse rx="5.60" ry="3.70" fill="none" stroke="#707070" stroke-width="0.50"/></g><g transform="translate(122.00,16.60) rotate(35.70)"><clipPath id="cg2h2"><ellipse rx="5.60" ry="3.70"/></clipPath><ellipse rx="5.60" ry="3.70" fill="#cdcdcd"/><ellipse cx="2.13" cy="-0.74" rx="5.60" ry="3.70" fill="#f5f5f5" stroke="#707070" stroke-opacity="0.55" stroke-width="0.40" clip-path="url(#cg2h2)"/><ellipse rx="5.60" ry="3.70" fill="none" stroke="#707070" stroke-width="0.50"/></g><g transform="translate(30.00,-16.60) rotate(-27.00)"><ellipse rx="3.20" ry="2.10" fill="#f6f6f6" stroke="#707070" stroke-width="0.50"/><path d="M-1.76,1.64 A1.76,1.68 0 0 1 1.44,1.74" fill="#fbfbfb" stroke="#707070" stroke-width="0.45"/></g></g></svg>
<svg style="left:430.00px;top:625.00px;" width="165.00" height="143.00" viewBox="430 625 165 143"><g transform="translate(453.90,673.05) rotate(29.90)"><defs><linearGradient id="cg3" gradientUnits="userSpaceOnUse" x1="0" y1="-26.60" x2="0" y2="26.60"><stop offset="0" stop-color="#b4b4b4"/><stop offset="0.025" stop-color="#cbcbcb"/><stop offset="0.08" stop-color="#dfdfdf"/><stop offset="0.17" stop-color="#ececec"/><stop offset="0.32" stop-color="#f6f6f6"/><stop offset="0.55" stop-color="#f9f9f9"/><stop offset="0.74" stop-color="#f1f1f1"/><stop offset="0.865" stop-color="#e6e6e6"/><stop offset="0.94" stop-color="#dcdcdc"/><stop offset="1" stop-color="#cdcdcd"/></linearGradient><linearGradient id="cg3x" gradientUnits="userSpaceOnUse" x1="0" y1="0" x2="134.50" y2="0"><stop offset="0" stop-color="#000" stop-opacity="0.030"/><stop offset="0.45" stop-color="#000" stop-opacity="0"/><stop offset="1" stop-color="#000" stop-opacity="0"/></linearGradient></defs><path d="M0.00,-26.00 L1.50,-26.60 A14.50,26.60 0 0 0 1.50,26.60 L0.00,26.00 A14.17,26.00 0 0 1 0.00,-26.00 Z" fill="#cfcfcf" stroke="#7a7a7a" stroke-width="0.50"/><path d="M1.50,-26.60 L132.00,-26.60 A14.50,26.60 0 0 1 132.00,26.60 L1.50,26.60 A14.50,26.60 0 0 1 1.50,-26.60 Z" fill="url(#cg3)"/><path d="M1.50,26.60 A14.50,26.60 0 0 1 1.50,-26.60" fill="none" stroke="#7a7a7a" stroke-width="0.50"/><path d="M1.50,-26.60 L132.00,-26.60 A14.50,26.60 0 0 1 132.00,26.60 L1.50,26.60 A14.50,26.60 0 0 1 1.50,-26.60 Z" fill="url(#cg3x)"/><path d="M-9.44,19.40 L141.92,19.40" stroke="#7a7a7a" stroke-width="0.50" fill="none"/><path d="M132.00,-26.60 A14.50,26.60 0 0 1 132.00,26.60 L134.50,26.00 A14.17,26.00 0 0 0 134.50,-26.00 Z" fill="#f3f3f3" stroke="#7a7a7a" stroke-width="0.50"/><ellipse cx="132.00" cy="0" rx="14.50" ry="26.60" fill="#f3f3f3" stroke="#7a7a7a" stroke-width="0.50"/><path d="M132.00,-26.10 L134.50,-25.50 L134.50,25.50 L132.00,26.10 Z" fill="#f3f3f3"/><ellipse cx="134.50" cy="0" rx="14.17" ry="26.00" fill="#d9d9d9" stroke="#7a7a7a" stroke-width="0.50"/><g transform="translate(3.00,19.40) rotate(35.70)"><clipPath id="cg3h0"><ellipse rx="8.60" ry="6.30"/></clipPath><ellipse rx="8.60" ry="6.30" fill="#cdcdcd"/><ellipse cx="3.27" cy="-1.26" rx="8.60" ry="6.30" fill="#f5f5f5" stroke="#7a7a7a" stroke-opacity="0.55" stroke-width="0.40" clip-path="url(#cg3h0)"/><ellipse rx="8.60" ry="6.30" fill="none" stroke="#7a7a7a" stroke-width="0.50"/></g><g transform="translate(108.00,19.40) rotate(35.70)"><clipPath id="cg3h1"><ellipse rx="8.60" ry="6.30"/></clipPath><ellipse rx="8.60" ry="6.30" fill="#cdcdcd"/><ellipse cx="3.27" cy="-1.26" rx="8.60" ry="6.30" fill="#f5f5f5" stroke="#7a7a7a" stroke-opacity="0.55" stroke-width="0.40" clip-path="url(#cg3h1)"/><ellipse rx="8.60" ry="6.30" fill="none" stroke="#7a7a7a" stroke-width="0.50"/></g></g></svg>
<svg style="left:762.00px;top:625.00px;" width="165.00" height="143.00" viewBox="762 625 165 143"><g transform="translate(785.90,673.05) rotate(29.90)"><defs><linearGradient id="cg4" gradientUnits="userSpaceOnUse" x1="0" y1="-26.60" x2="0" y2="26.60"><stop offset="0" stop-color="#b4b4b4"/><stop offset="0.025" stop-color="#cbcbcb"/><stop offset="0.08" stop-color="#dfdfdf"/><stop offset="0.17" stop-color="#ececec"/><stop offset="0.32" stop-color="#f6f6f6"/><stop offset="0.55" stop-color="#f9f9f9"/><stop offset="0.74" stop-color="#f1f1f1"/><stop offset="0.865" stop-color="#e6e6e6"/><stop offset="0.94" stop-color="#dcdcdc"/><stop offset="1" stop-color="#cdcdcd"/></linearGradient><linearGradient id="cg4x" gradientUnits="userSpaceOnUse" x1="0" y1="0" x2="134.50" y2="0"><stop offset="0" stop-color="#000" stop-opacity="0.030"/><stop offset="0.45" stop-color="#000" stop-opacity="0"/><stop offset="1" stop-color="#000" stop-opacity="0"/></linearGradient></defs><path d="M0.00,-26.00 L1.50,-26.60 A14.50,26.60 0 0 0 1.50,26.60 L0.00,26.00 A14.17,26.00 0 0 1 0.00,-26.00 Z" fill="#cfcfcf" stroke="#7a7a7a" stroke-width="0.50"/><path d="M1.50,-26.60 L132.00,-26.60 A14.50,26.60 0 0 1 132.00,26.60 L1.50,26.60 A14.50,26.60 0 0 1 1.50,-26.60 Z" fill="url(#cg4)"/><path d="M1.50,26.60 A14.50,26.60 0 0 1 1.50,-26.60" fill="none" stroke="#7a7a7a" stroke-width="0.50"/><path d="M1.50,-26.60 L132.00,-26.60 A14.50,26.60 0 0 1 132.00,26.60 L1.50,26.60 A14.50,26.60 0 0 1 1.50,-26.60 Z" fill="url(#cg4x)"/><path d="M-9.44,19.40 L141.92,19.40" stroke="#7a7a7a" stroke-width="0.50" fill="none"/><path d="M132.00,-26.60 A14.50,26.60 0 0 1 132.00,26.60 L134.50,26.00 A14.17,26.00 0 0 0 134.50,-26.00 Z" fill="#f3f3f3" stroke="#7a7a7a" stroke-width="0.50"/><ellipse cx="132.00" cy="0" rx="14.50" ry="26.60" fill="#f3f3f3" stroke="#7a7a7a" stroke-width="0.50"/><path d="M132.00,-26.10 L134.50,-25.50 L134.50,25.50 L132.00,26.10 Z" fill="#f3f3f3"/><ellipse cx="134.50" cy="0" rx="14.17" ry="26.00" fill="#d9d9d9" stroke="#7a7a7a" stroke-width="0.50"/><g transform="translate(3.00,19.40) rotate(35.70)"><clipPath id="cg4h0"><ellipse rx="8.60" ry="6.30"/></clipPath><ellipse rx="8.60" ry="6.30" fill="#cdcdcd"/><ellipse cx="3.27" cy="-1.26" rx="8.60" ry="6.30" fill="#f5f5f5" stroke="#7a7a7a" stroke-opacity="0.55" stroke-width="0.40" clip-path="url(#cg4h0)"/><ellipse rx="8.60" ry="6.30" fill="none" stroke="#7a7a7a" stroke-width="0.50"/></g><g transform="translate(108.00,19.40) rotate(35.70)"><clipPath id="cg4h1"><ellipse rx="8.60" ry="6.30"/></clipPath><ellipse rx="8.60" ry="6.30" fill="#cdcdcd"/><ellipse cx="3.27" cy="-1.26" rx="8.60" ry="6.30" fill="#f5f5f5" stroke="#7a7a7a" stroke-opacity="0.55" stroke-width="0.40" clip-path="url(#cg4h1)"/><ellipse rx="8.60" ry="6.30" fill="none" stroke="#7a7a7a" stroke-width="0.50"/></g></g></svg>
<svg style="left:1093.00px;top:625.00px;" width="165.00" height="143.00" viewBox="1093 625 165 143"><g transform="translate(1112.00,669.90) rotate(30.20)"><defs><linearGradient id="cg5" gradientUnits="userSpaceOnUse" x1="0" y1="-17.50" x2="0" y2="17.50"><stop offset="0" stop-color="#a9a9a9"/><stop offset="0.02" stop-color="#bbbbbb"/><stop offset="0.07" stop-color="#d2d2d2"/><stop offset="0.15" stop-color="#e2e2e2"/><stop offset="0.3" stop-color="#f0f0f0"/><stop offset="0.52" stop-color="#f5f5f4"/><stop offset="0.72" stop-color="#ececec"/><stop offset="0.865" stop-color="#dfdfdf"/><stop offset="0.94" stop-color="#d3d3d3"/><stop offset="1" stop-color="#c4c4c4"/></linearGradient><linearGradient id="cg5x" gradientUnits="userSpaceOnUse" x1="0" y1="0" x2="147.00" y2="0"><stop offset="0" stop-color="#000" stop-opacity="0.030"/><stop offset="0.45" stop-color="#000" stop-opacity="0"/><stop offset="1" stop-color="#000" stop-opacity="0"/></linearGradient></defs><path d="M0,-15.40 L16.80,-15.40 L16.80,15.40 L0,15.40 A8.60,15.40 0 0 1 0,-15.40 Z" fill="#c9c9c9" stroke="#707070" stroke-width="0.50"/><path d="M7.00,-16.70 L7.01,-17.50 A9.80,17.50 0 0 0 7.01,17.50 L7.00,16.70 A9.35,16.70 0 0 1 7.00,-16.70 Z" fill="#cfcfcf" stroke="#707070" stroke-width="0.50"/><path d="M7.01,-17.50 L144.50,-17.50 A9.80,17.50 0 0 1 144.50,17.50 L7.01,17.50 A9.80,17.50 0 0 1 7.01,-17.50 Z" fill="url(#cg5)"/><path d="M7.01,17.50 A9.80,17.50 0 0 1 7.01,-17.50" fill="none" stroke="#707070" stroke-width="0.50"/><path d="M7.01,-17.50 L144.50,-17.50 A9.80,17.50 0 0 1 144.50,17.50 L7.01,17.50 A9.80,17.50 0 0 1 7.01,-17.50 Z" fill="url(#cg5x)"/><path d="M144.50,-17.50 A9.80,17.50 0 0 1 144.50,17.50 L147.00,16.70 A9.35,16.70 0 0 0 147.00,-16.70 Z" fill="#f3f3f3" stroke="#707070" stroke-width="0.50"/><ellipse cx="144.50" cy="0" rx="9.80" ry="17.50" fill="#f3f3f3" stroke="#707070" stroke-width="0.50"/><path d="M144.50,-17.00 L147.00,-16.20 L147.00,16.20 L144.50,17.00 Z" fill="#f3f3f3"/><ellipse cx="147.00" cy="0" rx="9.35" ry="16.70" fill="#d9d9d9" stroke="#707070" stroke-width="0.50"/><g transform="translate(6.30,-12.10) rotate(-30.00)"><ellipse rx="5.20" ry="3.20" fill="#f6f6f6" stroke="#707070" stroke-width="0.50"/><path d="M-2.86,2.50 A2.86,2.56 0 0 1 2.34,2.66" fill="#fbfbfb" stroke="#707070" stroke-width="0.45"/></g><g transform="translate(131.00,-12.60) rotate(-30.00)"><ellipse rx="5.20" ry="3.20" fill="#f6f6f6" stroke="#707070" stroke-width="0.50"/><path d="M-2.86,2.50 A2.86,2.56 0 0 1 2.34,2.66" fill="#fbfbfb" stroke="#707070" stroke-width="0.45"/></g></g></svg>
<div style="left:1480.00px;top:30.00px;width:4.00px;height:738.00px;background:#fcfcfb;"></div>
<div style="left:1482.50px;top:115.00px;width:1.50px;height:602.00px;background:#c3c3c3;"></div>
</div></body></html>
